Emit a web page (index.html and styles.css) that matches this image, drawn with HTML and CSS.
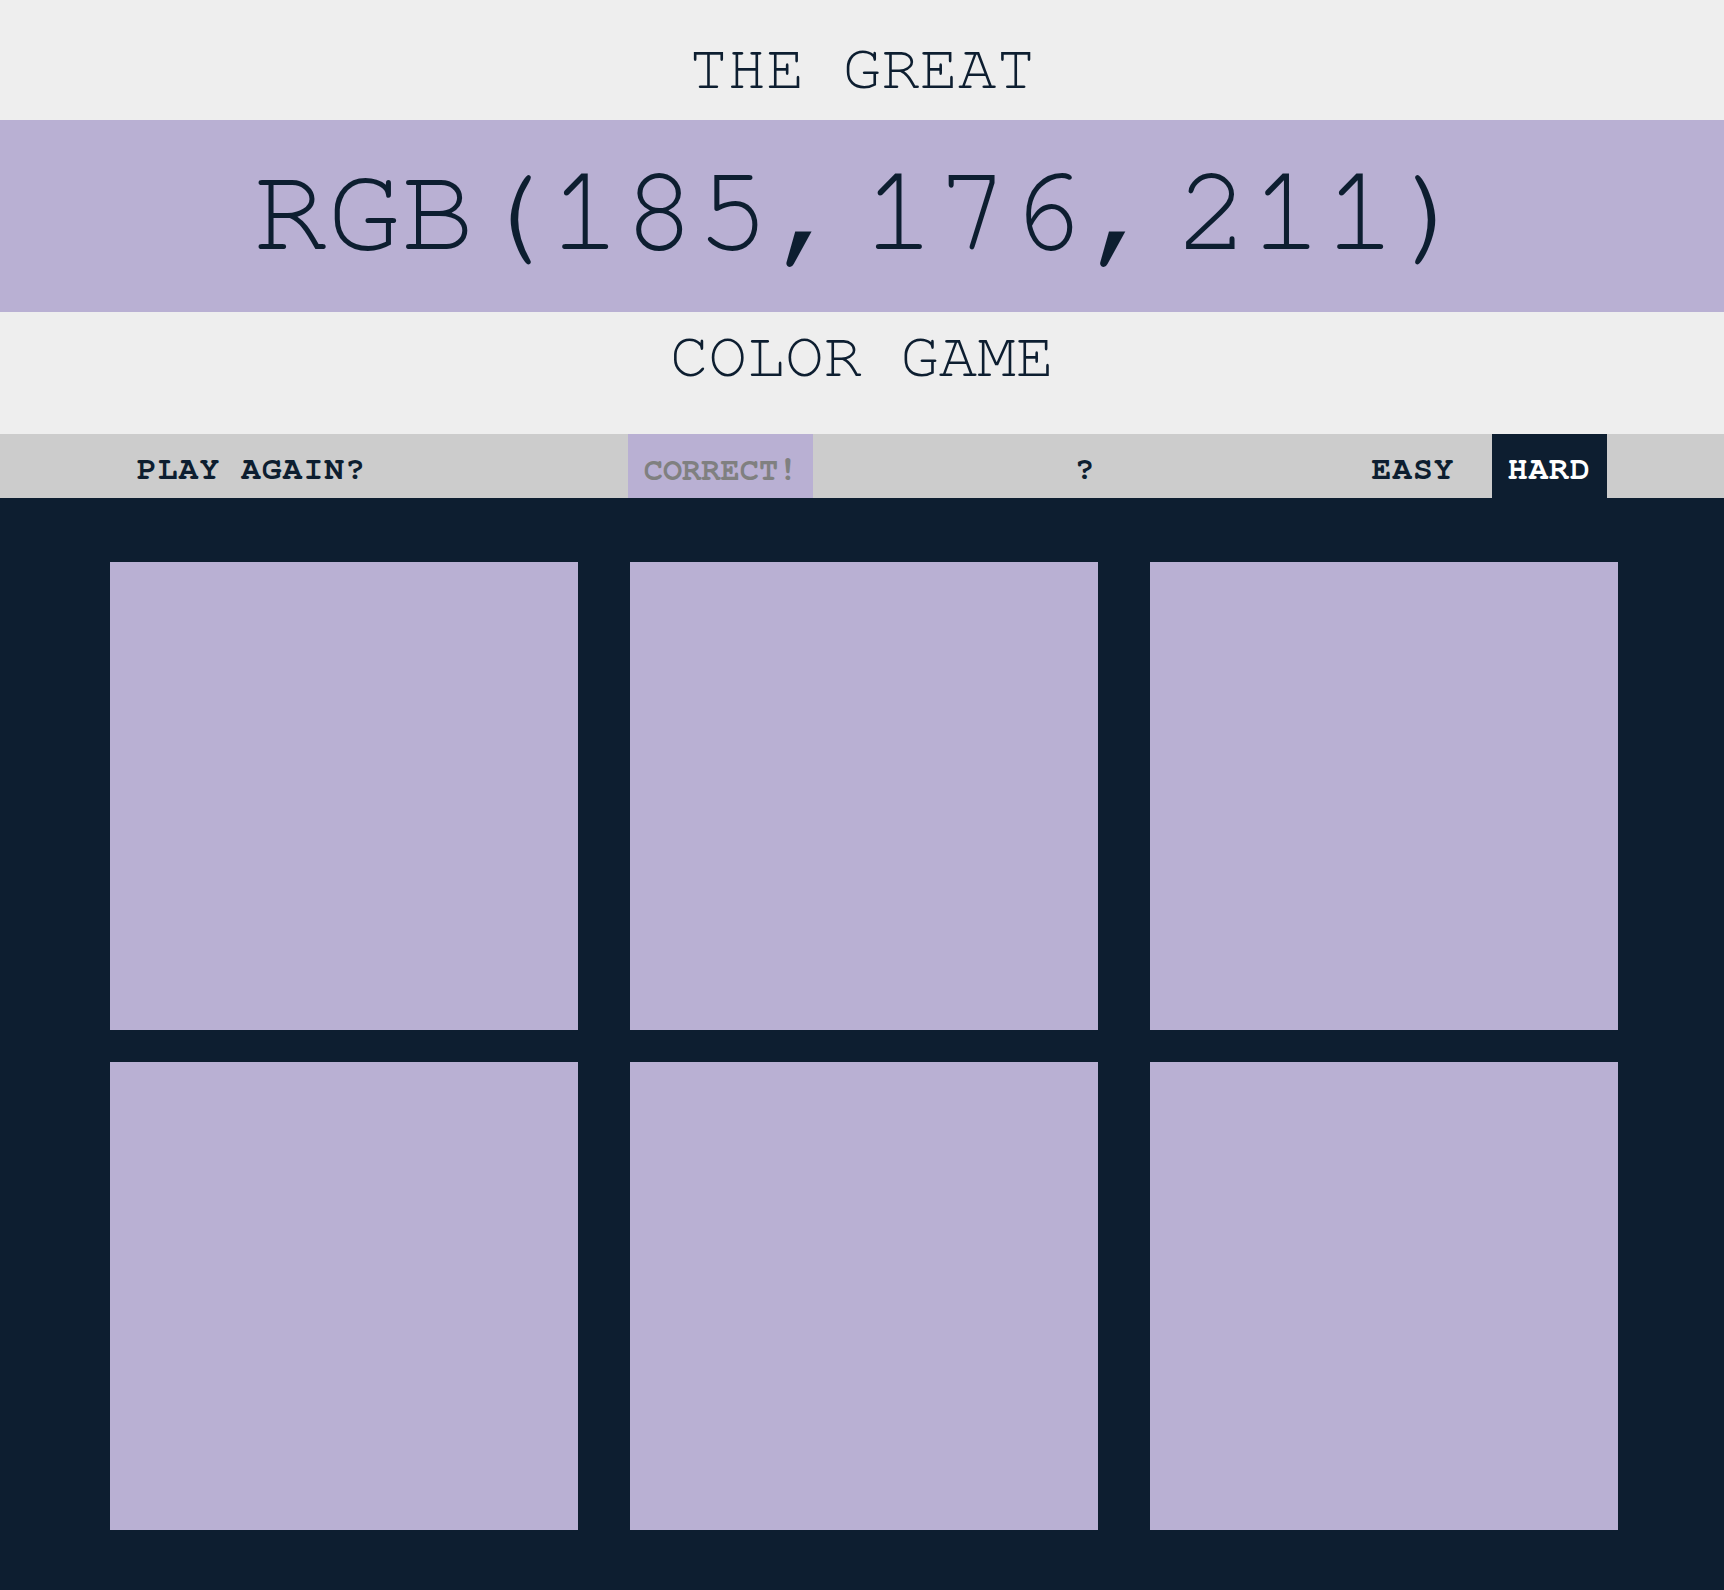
FILE: index.html
```html
<!DOCTYPE html>
<html lang="en">
<head>
  <meta charset="UTF-8">
  <meta name="viewport" content="width=device-width, initial-scale=1.0">
  <title>The Great RGB Color Game</title>
  <link rel="stylesheet" href="styles.css">
</head>
<body>

<h1 class="title">
  <span class="title-line top">The Great</span>
  <span class="color-display" id="colorDisplay">RGB(185, 176, 211)</span>
  <span class="title-line bottom">Color Game</span>
</h1>

<div class="stripe">
  <button class="btn-new" id="reset">Play Again?</button>
  <span class="message" id="message">Correct!</span>
  <span class="hint">?</span>
  <button class="mode">Easy</button>
  <button class="mode selected">Hard</button>
</div>

<div class="board" id="board">
  <div class="square"></div>
  <div class="square"></div>
  <div class="square"></div>
  <div class="square"></div>
  <div class="square"></div>
  <div class="square"></div>
</div>

</body>
</html>
```

FILE: styles.css
```css
body {
  margin: 0;
  padding: 0;
  font-family: "Nimbus Mono PS", FreeMono, "Courier New", Courier, "Liberation Mono", monospace;
  background-color: #0d1e30;
  color: #0d1e30;
}

.title {
  margin: 0;
  font-weight: normal;
  text-align: center;
  text-transform: uppercase;
  background-color: #eeeeee;
}

.title-line {
  display: block;
  font-size: 64px;
  line-height: 64px;
}

.title-line.top {
  padding: 37px 0 19px;
}

.title-line.bottom {
  padding: 13px 0 45px;
}

.color-display {
  display: block;
  font-size: 123px;
  line-height: 123px;
  word-spacing: -0.45em;
  padding: 31px 0 38px;
  background-color: rgb(185, 176, 211);
}

.stripe {
  display: flex;
  height: 64px;
  background-color: #cccccc;
  font-size: 33px;
  font-weight: bold;
  text-transform: uppercase;
}

.stripe > * {
  box-sizing: border-box;
  height: 64px;
  padding-top: 8px;
  line-height: 56px;
}

button {
  font-family: inherit;
  font-size: inherit;
  font-weight: bold;
  text-transform: uppercase;
  letter-spacing: 1px;
  color: #0d1e30;
  background: none;
  border: none;
  padding: 8px 16px 0;
  cursor: pointer;
  outline: none;
}

.btn-new {
  margin-left: 121px;
}

.message {
  margin-left: 246px;
  padding: 8px 16px 0;
  font-size: 32px;
  color: #808080;
  background-color: rgb(185, 176, 211);
}

.hint {
  width: 542px;
  text-align: center;
}

.mode + .mode {
  margin-left: 21px;
}

.mode.selected {
  color: white;
  background-color: #0d1e30;
}

.board {
  display: grid;
  grid-template-columns: repeat(3, 468px);
  column-gap: 52px;
  row-gap: 32px;
  justify-content: center;
  padding: 64px 0 60px 4px;
}

.square {
  height: 468px;
  background-color: rgb(185, 176, 211);
}
```
